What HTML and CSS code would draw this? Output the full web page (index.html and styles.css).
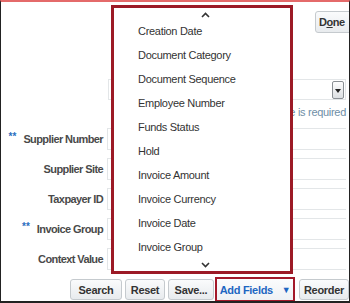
FILE: index.html
```html
<!DOCTYPE html>
<html lang="en">
<head>
  <meta charset="UTF-8">
  <title>Search Fields</title>
  <link rel="stylesheet" href="styles.css">
</head>
<body>
  <div class="frame">
    <div class="top-bar">
      <button class="btn done-btn">D<u>o</u>ne</button>
    </div>

    <div class="select-row">
      <div class="select-box">
        <span class="select-arrow"></span>
      </div>
    </div>
    <div class="hint">A value is required</div>

    <div class="form">
      <div class="form-row">
        <label><span class="req">**</span>Supplier Number</label>
        <div class="field"></div>
      </div>
      <div class="form-row">
        <label>Supplier Site</label>
        <div class="field"></div>
      </div>
      <div class="form-row">
        <label>Taxpayer ID</label>
        <div class="field"></div>
      </div>
      <div class="form-row">
        <label><span class="req">**</span>Invoice Group</label>
        <div class="field"></div>
      </div>
      <div class="form-row">
        <label>Context Value</label>
        <div class="field"></div>
      </div>
    </div>

    <div class="actions">
      <button class="btn search-btn">Search</button>
      <button class="btn reset-btn">Reset</button>
      <button class="btn save-btn">Save...</button>
      <div class="highlight">
        <button class="btn add-btn">Add Fields <span class="tri">&#9660;</span></button>
      </div>
      <button class="btn reorder-btn">Reorder</button>
    </div>

    <div class="menu">
      <div class="scroll-arrow">
        <svg width="9" height="6" viewBox="0 0 9 6"><path d="M1 5 L4.5 1.5 L8 5" fill="none" stroke="#333" stroke-width="1.6"/></svg>
      </div>
      <ul class="menu-list">
        <li>Creation Date</li>
        <li>Document Category</li>
        <li>Document Sequence</li>
        <li>Employee Number</li>
        <li>Funds Status</li>
        <li>Hold</li>
        <li>Invoice Amount</li>
        <li>Invoice Currency</li>
        <li>Invoice Date</li>
        <li>Invoice Group</li>
      </ul>
      <div class="scroll-arrow">
        <svg width="9" height="6" viewBox="0 0 9 6"><path d="M1 1 L4.5 4.5 L8 1" fill="none" stroke="#333" stroke-width="1.6"/></svg>
      </div>
    </div>
  </div>
</body>
</html>
```

FILE: styles.css
```css
/* Global */
* {
  box-sizing: border-box;
}

body {
  margin: 0;
  padding: 0;
  background-color: #fff;
  font-family: 'Liberation Sans', Arial, sans-serif;
  font-size: 11px;
  letter-spacing: -0.3px;
  color: #333;
}

/* Frame */
.frame {
  position: relative;
  width: 350px;
  height: 303px;
  border-top: 2px solid #e46a6a;
  border-left: 1px solid #222;
  border-right: 1px solid #222;
  border-bottom: 2px solid #222;
  overflow: hidden;
  background-color: #fff;
}

/* Buttons */
.btn {
  height: 21px;
  padding: 0;
  font-family: inherit;
  font-size: 11px;
  letter-spacing: -0.3px;
  font-weight: bold;
  color: #333;
  background: linear-gradient(#fafbfc, #e8ebee);
  border: 1px solid #c5cace;
  border-radius: 3px;
  white-space: nowrap;
  text-align: center;
}

/* Top bar */
.top-bar {
  display: flex;
  justify-content: flex-end;
  padding-top: 9px;
  margin-right: -6px;
}

.done-btn {
  width: 40px;
  height: 22px;
  text-align: left;
  padding-left: 3px;
  letter-spacing: -0.5px;
}

/* Select row */
.select-row {
  display: flex;
  justify-content: flex-end;
  margin-top: 46px;
  padding-right: 3px;
}

.select-box {
  width: 238px;
  height: 21px;
  border: 1px solid #e3e6e8;
  display: flex;
  justify-content: flex-end;
  align-items: center;
}

.select-arrow {
  position: relative;
  width: 12px;
  height: 18px;
  margin-right: 1px;
  border: 1px solid #8a8f94;
  border-radius: 2px;
  background: linear-gradient(#fdfdfd, #dcdfe2);
}

.select-arrow::after {
  content: '';
  position: absolute;
  left: 2px;
  top: 7px;
  border-left: 3.5px solid transparent;
  border-right: 3.5px solid transparent;
  border-top: 4px solid #222;
}

.hint {
  text-align: right;
  padding-right: 3px;
  margin-top: 6px;
  font-size: 11px;
  color: #6e8ea6;
}

/* Form */
.form {
  margin-top: 6px;
}

.form-row {
  display: flex;
  align-items: center;
  height: 30px;
}

.form-row label {
  width: 102px;
  text-align: right;
  font-weight: bold;
  letter-spacing: -0.6px;
  color: #4a4a4a;
  white-space: nowrap;
}

.req {
  color: #2b6fc0;
  margin-right: 7px;
  font-size: 10px;
  letter-spacing: 0;
  position: relative;
  top: -3px;
}

.field {
  flex: 1;
  height: 22px;
  margin-left: 4px;
  margin-right: 3px;
  border-top: 1px solid #e3e6e8;
  border-bottom: 1px solid #e3e6e8;
  border-left: 1px solid #e3e6e8;
}

/* Actions */
.actions {
  display: flex;
  align-items: center;
  margin-top: 3px;
  padding-left: 69px;
}

.search-btn { width: 52px; }
.reset-btn { width: 40px; margin-left: 3px; }
.save-btn { width: 46px; margin-left: 3px; }
.reorder-btn { width: 50px; margin-left: 4px; }

.highlight {
  display: flex;
  width: 80px;
  height: 25px;
  margin-left: 1px;
  border: 2px solid #a3192a;
}

.add-btn {
  width: 100%;
  height: 100%;
  border: none;
  border-radius: 0;
  background: linear-gradient(#fbfcfd, #eef1f4);
  color: #1d66c2;
}

.add-btn .tri {
  font-size: 9px;
  margin-left: 6px;
  position: relative;
  top: -1px;
}

/* Popup menu */
.menu {
  position: absolute;
  left: 110px;
  top: 3px;
  width: 182px;
  height: 269px;
  border: 3px solid #9c1a26;
  background-color: #fff;
  display: flex;
  flex-direction: column;
}

.scroll-arrow {
  display: flex;
  justify-content: center;
  height: 14px;
  align-items: center;
  margin-left: 6px;
}

.scroll-arrow:first-child {
  margin-top: 1px;
}

.menu-list {
  list-style: none;
  margin: 0;
  padding: 0;
}

.menu-list li {
  height: 24px;
  line-height: 24px;
  padding-left: 24px;
  color: #333;
}

.menu-list li:first-child {
  margin-top: -2px;
}
```
